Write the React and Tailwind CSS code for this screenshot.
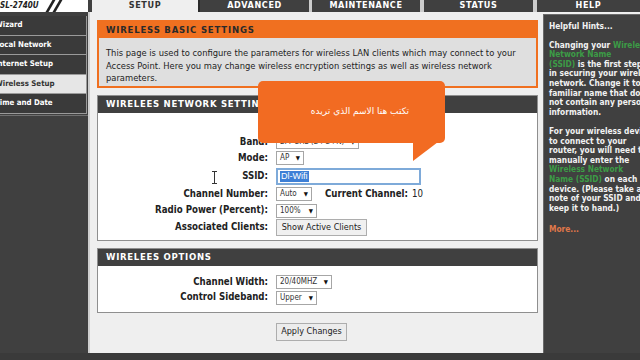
import React from 'react'

function Sel({ children, w }) {
  return (
    <span className={`inline-flex items-center justify-between h-[14px] border border-[#a6a6a6] bg-white pl-[3px] pr-[3px] text-[8px] leading-none text-[#333] ${w}`}>
      <span className="whitespace-nowrap">{children}</span>
      <span className="text-[6px] text-[#111]">▼</span>
    </span>
  )
}

function Row({ label, h, children }) {
  return (
    <div className={`grid grid-cols-[170px_1fr] gap-x-[8px] items-center ${h}`}>
      <span className="text-right text-[9.6px] font-bold text-[#222] whitespace-nowrap">{label}</span>
      <div className="flex items-center">{children}</div>
    </div>
  )
}

const navItems = ['Wizard', 'Local Network', 'Internet Setup', 'Wireless Setup', 'Time and Date']

const hints = [
  [['Changing your ', 0], ['Wireless', 1]],
  [['Network Name', 1]],
  [['(SSID)', 1], [' is the first step', 0]],
  [['in securing your wireless', 0]],
  [['network. Change it to a', 0]],
  [['familiar name that does', 0]],
  [['not contain any personal', 0]],
  [['information.', 0]],
  null,
  [['For your wireless device', 0]],
  [['to connect to your', 0]],
  [['router, you will need to', 0]],
  [['manually enter the', 0]],
  [['Wireless Network', 1]],
  [['Name (SSID)', 1], [' on each', 0]],
  [['device. (Please take a', 0]],
  [['note of your SSID and', 0]],
  [['keep it to hand.)', 0]],
]

export default function App() {
  return (
    <div className="relative w-[640px] h-[360px] overflow-hidden bg-[#404040] flex flex-col font-['DejaVu_Sans_Condensed','DejaVu_Sans',sans-serif]">
      {/* tabs */}
      <div className="flex h-[12px] shrink-0 bg-[#cdcdcd]">
        <div className="w-[88px] bg-white flex items-center overflow-hidden">
          <span className="-ml-[6px] -mt-[1px] text-[8px] font-bold italic text-[#222] whitespace-nowrap">DSL-2740U</span>
          <div className="ml-[10px] flex gap-[4px]">
            <div className="w-[3px] h-[12px] bg-[#222] skew-x-[-30deg]" />
            <div className="w-[3px] h-[12px] bg-[#222] skew-x-[-30deg]" />
          </div>
        </div>
        <div className="w-[4px] bg-[#404040]" />
        <div className="w-[106px] bg-[#efefef] flex justify-center text-[9px] font-bold tracking-[0.6px] text-[#333] leading-[11px]">SETUP</div>
        <div className="w-[111px] bg-[#404040] border-l-2 border-[#2a2a2a] flex justify-center text-[9px] font-bold tracking-[0.6px] text-white leading-[11px]">ADVANCED</div>
        <div className="w-[3px]" />
        <div className="w-[108px] bg-[#404040] flex justify-center text-[9px] font-bold tracking-[0.6px] text-white leading-[11px]">MAINTENANCE</div>
        <div className="w-[4px]" />
        <div className="w-[109px] bg-[#404040] flex justify-center text-[9px] font-bold tracking-[0.6px] text-white leading-[11px]">STATUS</div>
        <div className="w-[4px]" />
        <div className="flex-1 bg-[#404040] flex justify-center text-[9px] font-bold tracking-[0.6px] text-white leading-[11px]">HELP</div>
      </div>

      <div className="flex flex-1 min-h-0">
        {/* left nav */}
        <div className="w-[90px] shrink-0 border-r-2 border-[#cfcfcf] pt-[4px] overflow-hidden flex flex-col">
          {navItems.map((t) => {
            const active = t === 'Wireless Setup'
            return (
              <div
                key={t}
                className={`h-[19.5px] shrink-0 flex items-center border-b border-r border-[#9a9a9a] mr-[1px] ${active ? 'bg-[#e6e6e6] text-[#333]' : 'bg-[#3a3a3a] text-white'}`}
              >
                <span className="-ml-[5px] text-[7.8px] font-semibold whitespace-nowrap">{t}</span>
              </div>
            )
          })}
          <div className="flex-1 border-t border-[#707070] mt-[1px]" />
        </div>

        {/* main */}
        <div className="flex-1 bg-[#efefef] pl-[7px] pr-[5px] pt-[8px] flex flex-col">
          <div className="border-2 border-[#f07020]">
            <div className="h-[16px] bg-[#f07020] flex items-center pl-[7px] text-[9.5px] font-bold tracking-[0.8px] text-[#2a2a2a]">
              WIRELESS BASIC SETTINGS
            </div>
            <div className="h-[48px] bg-[#dfdfdf] pl-[7px] pt-[9px] text-[9.3px] leading-[12.5px] text-[#222] whitespace-nowrap">
              This page is used to configure the parameters for wireless LAN clients which may connect to your<br />
              Access Point. Here you may change wireless encryption settings as well as wireless network<br />
              parameters.
            </div>
          </div>

          <div className="mt-[7px] border border-[#8f8f8f]">
            <div className="h-[17px] bg-[#404040] flex items-center pl-[8px] text-[9.5px] font-bold tracking-[0.7px] text-white">
              WIRELEES NETWORK SETTINGS
            </div>
            <div className="h-[127px] bg-white pt-[21px] flex flex-col">
              <Row label="Band:" h="h-[16px]">
                <Sel w="w-[83px]">2.4 GHz (B+G+N)</Sel>
              </Row>
              <Row label="Mode:" h="h-[16px]">
                <Sel w="w-[28px]">AP</Sel>
              </Row>
              <Row label="SSID:" h="h-[20px]">
                <div className="w-[145px] h-[17px] border-2 border-[#7eaad9] bg-white flex items-center pl-[2px]">
                  <span className="bg-[#3d7fd6] text-white text-[9px] leading-[11px] px-[1px] font-['Liberation_Sans',sans-serif]">Dl-Wifi</span>
                </div>
              </Row>
              <Row label="Channel Number:" h="h-[16px]">
                <Sel w="w-[36px]">Auto</Sel>
                <span className="ml-[13px] text-[9.6px] font-bold text-[#222] whitespace-nowrap">Current Channel:</span>
                <span className="ml-[4px] text-[9.6px] text-[#222]">10</span>
              </Row>
              <Row label="Radio Power (Percent):" h="h-[17px]">
                <Sel w="w-[41px]">100%</Sel>
              </Row>
              <Row label="Associated Clients:" h="h-[17px]">
                <button className="w-[91px] h-[17px] bg-[#f0f0f0] border border-[#adadad] text-[9px] text-[#222] whitespace-nowrap">
                  Show Active Clients
                </button>
              </Row>
            </div>
          </div>

          <div className="mt-[7px] border border-[#8f8f8f]">
            <div className="h-[17px] bg-[#404040] flex items-center pl-[8px] text-[9.5px] font-bold tracking-[0.7px] text-white">
              WIRELEES OPTIONS
            </div>
            <div className="h-[46px] bg-white pt-[8px] flex flex-col">
              <Row label="Channel Width:" h="h-[16px]">
                <Sel w="w-[56px]">20/40MHZ</Sel>
              </Row>
              <Row label="Control Sideband:" h="h-[15px]">
                <Sel w="w-[41px]">Upper</Sel>
              </Row>
            </div>
          </div>

          <div className="mt-[10px] pl-[179px] flex">
            <button className="w-[71px] h-[18px] bg-[#ececec] border border-[#adadad] text-[9px] text-[#222] whitespace-nowrap">
              Apply Changes
            </button>
          </div>
        </div>

        {/* help */}
        <div className="w-[97px] shrink-0 bg-[#efefef] pt-[2px]">
          <div className="h-full bg-[#404040] border-l border-t border-[#6a6a6a] pl-[5px] pt-[7px] overflow-hidden text-[8.3px] font-bold leading-[9.6px] text-[#f2f2f2]">
            <div className="mb-[9px] whitespace-nowrap">Helpful Hints...</div>
            {hints.map((line, i) =>
              line ? (
                <div key={i} className="whitespace-nowrap">
                  {line.map(([t, g], j) => (
                    <span key={j} className={g ? 'text-[#3c9c46]' : ''}>{t}</span>
                  ))}
                </div>
              ) : (
                <div key={i} className="h-[9.6px]" />
              )
            )}
            <div className="mt-[12px] text-[#e0784a]">More...</div>
          </div>
        </div>
      </div>

      <div className="h-[7px] shrink-0 bg-[#3a3a3a]" />

      {/* tooltip overlay */}
      <div className="absolute left-[258px] top-[81px] w-[187px] h-[62px] rounded-[5px] bg-[#f26b22] flex items-center justify-center pl-[17px]">
        <span dir="rtl" className="text-[9px] text-white font-['DejaVu_Sans',sans-serif]">تكتب هنا الاسم الذي تريده</span>
      </div>
      <svg className="absolute left-[413px] top-[142px]" width="25" height="19" viewBox="0 0 25 19">
        <polygon points="0,0 0,19 25,0" fill="#f26b22" />
      </svg>

      {/* text cursor */}
      <svg className="absolute left-[211px] top-[171px]" width="7" height="13" viewBox="0 0 7 13">
        <path d="M1 0.5h5M1 12.5h5M3.5 0.5v12" stroke="#333" strokeWidth="1" fill="none" />
      </svg>
    </div>
  )
}
